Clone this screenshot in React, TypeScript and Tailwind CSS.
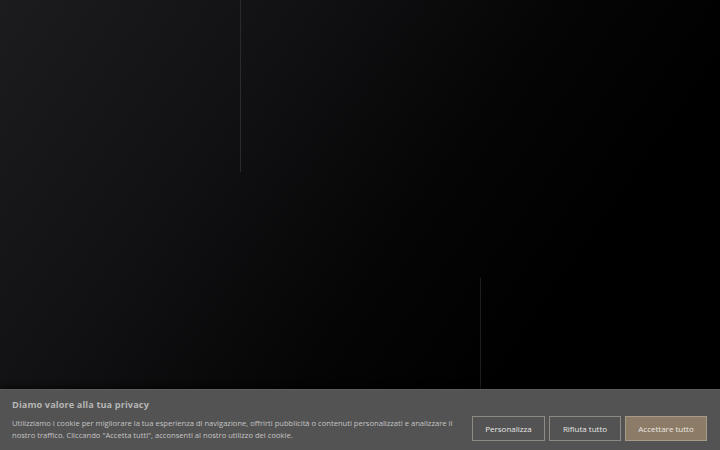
import React from "react";

export default function App() {
  return (
    <div
      className="relative w-[720px] h-[450px] overflow-hidden flex flex-col bg-black"
      style={{ fontFamily: "'Open Sans', 'Noto Sans', sans-serif" }}
    >
      <div className="absolute inset-0 bg-[linear-gradient(125deg,#1c1c1f_0%,#111113_30%,#050506_55%,#000000_75%)]" />
      <div className="absolute left-[240px] top-0 w-px h-[172px] bg-[#2a2a2c]" />
      <div className="absolute left-[480px] top-[278px] w-px h-[112px] bg-[#1e1e1e]" />
      <div className="flex-1" />
      <div className="relative h-[61px] bg-[#535353] border-t border-[#5e5e5e] shadow-[0_-2px_6px_rgba(0,0,0,0.6)] pl-[12px] pr-[13px] pt-[8px]">
        <div className="text-[9.2px] leading-[13px] font-bold text-[#b5b5b5] tracking-[0.1px]">
          Diamo valore alla tua privacy
        </div>
        <div className="flex items-start mt-[5px]">
          <p className="w-[448px] text-[7.6px] leading-[12px] text-[#c4c4c4] pt-[1px]">
            Utilizziamo i cookie per migliorare la tua esperienza di navigazione, offrirti pubblicità o contenuti personalizzati e analizzare il nostro traffico. Cliccando "Accetta tutti", acconsenti al nostro utilizzo dei cookie.
          </p>
          <div className="ml-auto flex gap-[4px]">
            <button className="w-[73px] h-[25px] border border-[#8f8b84] text-[8px] text-[#e6e6e6] bg-transparent">
              Personalizza
            </button>
            <button className="w-[72px] h-[25px] border border-[#8f8b84] text-[8px] text-[#e6e6e6] bg-transparent">
              Rifiuta tutto
            </button>
            <button className="w-[82px] h-[25px] border border-[#a69a88] text-[8px] text-[#ece8e2] bg-[#8b7b67]">
              Accettare tutto
            </button>
          </div>
        </div>
      </div>
    </div>
  );
}
